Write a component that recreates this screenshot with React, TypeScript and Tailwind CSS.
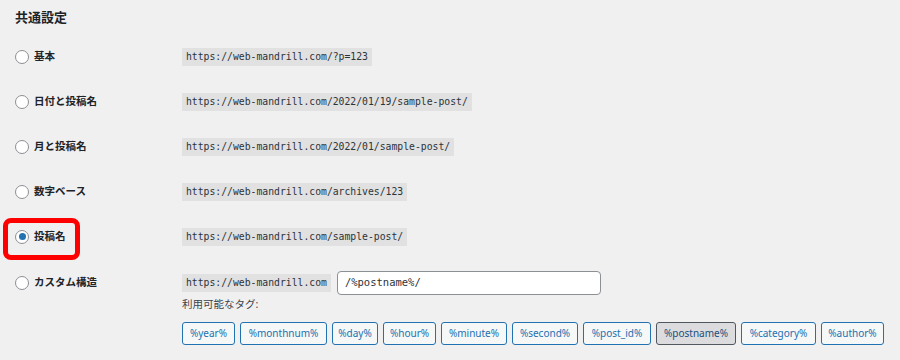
const rows = [
  { label: "基本", url: "https://web-mandrill.com/?p=123" },
  { label: "日付と投稿名", url: "https://web-mandrill.com/2022/01/19/sample-post/" },
  { label: "月と投稿名", url: "https://web-mandrill.com/2022/01/sample-post/" },
  { label: "数字ベース", url: "https://web-mandrill.com/archives/123" },
  { label: "投稿名", url: "https://web-mandrill.com/sample-post/", checked: true },
];

const tags = [
  { t: "%year%", w: "w-[53px]" },
  { t: "%monthnum%", w: "w-[87px]" },
  { t: "%day%", w: "w-[46px]" },
  { t: "%hour%", w: "w-[53px]" },
  { t: "%minute%", w: "w-[66px]" },
  { t: "%second%", w: "w-[66px]" },
  { t: "%post_id%", w: "w-[68px]" },
  { t: "%postname%", w: "w-[80px]", active: true },
  { t: "%category%", w: "w-[75px]" },
  { t: "%author%", w: "w-[63px]" },
];

const Radio = ({ checked }: { checked?: boolean }) => (
  <span className="flex h-[14px] w-[14px] items-center justify-center rounded-full border border-[#8c8f94] bg-white">
    {checked && <span className="h-[7px] w-[7px] rounded-full bg-[#2271b1]" />}
  </span>
);

const Code = ({ children }: { children: string }) => (
  <code className="bg-[#e1e1e2] px-[4px] leading-[18px] text-[9.75px] text-[#2c3338] font-['DejaVu_Sans_Mono',monospace]">
    {children}
  </code>
);

export default function App() {
  return (
    <div className="h-[360px] w-[900px] overflow-hidden bg-[#f0f0f1] font-['Noto_Sans','Noto_Sans_CJK_JP',sans-serif] text-[#1d2327]">
      <h2 className="pl-[15px] pt-[9px] text-[13px] font-bold leading-[17px]">共通設定</h2>
      <div className="mt-[8px] flex flex-col">
        {rows.map((r, i) => (
          <div key={i} className="relative flex h-[45px] items-center">
            {r.checked && (
              <div className="absolute left-[3px] top-[4px] h-[42px] w-[77px] rounded-[8px] border-[5px] border-[#ff0000]" />
            )}
            <div className="flex w-[182px] items-center gap-[5px] pl-[15px]">
              <Radio checked={r.checked} />
              <span className="text-[10.5px] font-bold">{r.label}</span>
            </div>
            <Code>{r.url}</Code>
          </div>
        ))}
        <div className="mt-[12px] flex items-start">
          <div className="flex h-[24px] w-[182px] items-center gap-[5px] pl-[15px]">
            <Radio />
            <span className="text-[10.5px] font-bold">カスタム構造</span>
          </div>
          <div className="flex flex-col">
            <div className="flex items-center gap-[6px]">
              <Code>https://web-mandrill.com</Code>
              <div className="flex h-[24px] w-[264px] items-center rounded-[4px] border border-[#8c8f94] bg-white px-[7px] text-[10.5px] text-[#2c3338] font-['DejaVu_Sans_Mono',monospace]">
                /%postname%/
              </div>
            </div>
            <p className="text-[10.5px] leading-[18px] text-[#3c434a]">利用可能なタグ:</p>
            <div className="mt-[9px] flex gap-[5px]">
              {tags.map((g) => (
                <span
                  key={g.t}
                  className={`flex h-[23px] items-center justify-center rounded-[3px] border text-[10px] ${g.w} ${
                    g.active
                      ? "border-[#50575e] bg-[#dcdcde] text-[#1d4e7a]"
                      : "border-[#2271b1] bg-[#f6f7f7] text-[#2271b1]"
                  }`}
                >
                  {g.t}
                </span>
              ))}
            </div>
          </div>
        </div>
      </div>
    </div>
  );
}
